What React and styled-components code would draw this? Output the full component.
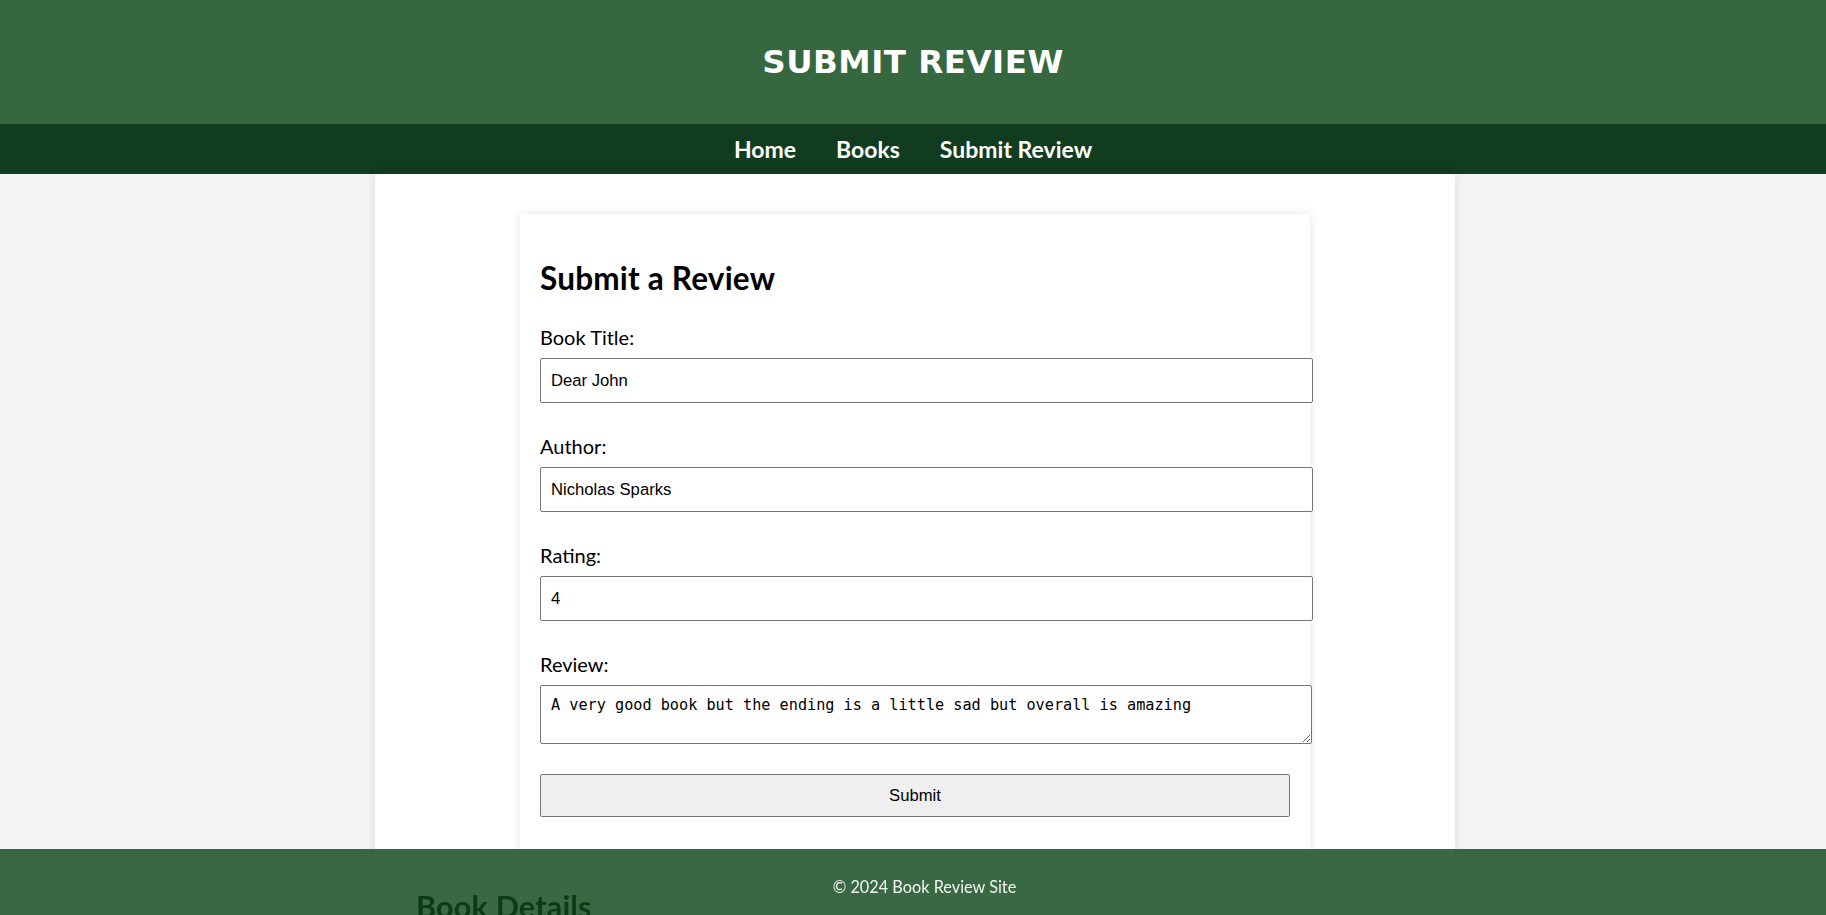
import React from 'react'
import styled, { createGlobalStyle } from 'styled-components'

const GlobalStyle = createGlobalStyle`
  html, body {
    margin: 0;
    padding: 0;
    overflow: hidden;
  }
  body {
    background: #f4f4f4;
    font-family: Lato, "Open Sans", sans-serif;
    color: #000;
  }
`

const Header = styled.header`
  height: 124px;
  background: #35683f;
  display: flex;
  align-items: center;
  justify-content: center;
`

const Title = styled.h1`
  margin: 0;
  color: #fff;
  font-family: "Comic Sans MS", "DejaVu Sans", sans-serif;
  font-size: 32.5px;
  font-weight: bold;
  letter-spacing: 0.5px;
`

const Nav = styled.nav`
  height: 50px;
  background: #113c1f;
  display: flex;
  align-items: center;
  justify-content: center;
  gap: 40px;
`

const NavLink = styled.a`
  color: #fff;
  text-decoration: none;
  font-weight: bold;
  font-size: 23px;
`

const Main = styled.main`
  padding-left: 4px;
`

const Container = styled.div`
  width: 1080px;
  margin: 0 auto;
  box-sizing: border-box;
  padding: 40px 41px 40px;
  background: #fff;
  box-shadow: 0 0 10px rgba(0, 0, 0, 0.1);
`

const Card = styled.section`
  width: 750px;
  margin: 0 auto;
  padding: 20px 20px 46px;
  background: #fff;
  box-shadow: 0 0 10px rgba(0, 0, 0, 0.1);
`

const Heading = styled.h2`
  margin: 24px 0 26px;
  font-size: 31.5px;
  font-weight: bold;
  line-height: 40px;
  letter-spacing: 0.2px;
`

const Field = styled.div`
  margin-bottom: 30px;
`

const Label = styled.label`
  display: block;
  font-size: 20px;
  line-height: 27px;
  margin-bottom: 7px;
`

const TextInput = styled.input`
  display: block;
  width: 751px;
  height: 43px;
  padding: 0 10px;
  margin: 0;
  border: 1px solid #767676;
  border-radius: 2px;
  font-family: "Liberation Sans", Arial, sans-serif;
  font-size: 16.67px;
  color: #000;
  background: #fff;
`

const TextArea = styled.textarea`
  display: block;
  box-sizing: border-box;
  width: 772px;
  height: 59px;
  padding: 10px;
  margin: 0;
  border: 1px solid #767676;
  border-radius: 2px;
  font-family: "DejaVu Sans Mono", "Liberation Mono", monospace;
  font-size: 15.2px;
  color: #000;
`

const SubmitButton = styled.button`
  display: block;
  width: 750px;
  height: 43px;
  margin-top: 30px;
  background: #efefef;
  border: 1px solid #767676;
  border-radius: 2px;
  font-family: "Liberation Sans", Arial, sans-serif;
  font-size: 16.67px;
  color: #000;
`

const DetailsTitle = styled.h2`
  position: relative;
  z-index: 2;
  margin: 23px 0 0;
  font-size: 30.5px;
  line-height: 40px;
  letter-spacing: 0.2px;
  font-weight: bold;
  color: #0d3a1a;
`

const Footer = styled.footer`
  position: fixed;
  left: 0;
  right: 0;
  bottom: 0;
  height: 66px;
  box-sizing: border-box;
  padding: 28px 0 0 23px;
  text-align: center;
  background: rgba(36, 89, 46, 0.9);
  color: #f4f4f4;
  font-size: 16.3px;
  line-height: 20px;
`

const fields = [
  { label: 'Book Title:', value: 'Dear John' },
  { label: 'Author:', value: 'Nicholas Sparks' },
  { label: 'Rating:', value: '4' },
]

export default function App() {
  return (
    <>
      <GlobalStyle />
      <Header>
        <Title>SUBMIT REVIEW</Title>
      </Header>
      <Nav>
        <NavLink href="#">Home</NavLink>
        <NavLink href="#">Books</NavLink>
        <NavLink href="#">Submit Review</NavLink>
      </Nav>
      <Main>
        <Container>
          <Card>
            <Heading>Submit a Review</Heading>
            <form onSubmit={(e) => e.preventDefault()}>
              {fields.map((f) => (
                <Field key={f.label}>
                  <Label>{f.label}</Label>
                  <TextInput type="text" defaultValue={f.value} />
                </Field>
              ))}
              <div>
                <Label>Review:</Label>
                <TextArea defaultValue="A very good book but the ending is a little sad but overall is amazing" />
              </div>
              <SubmitButton type="submit">Submit</SubmitButton>
            </form>
          </Card>
          <DetailsTitle>Book Details</DetailsTitle>
        </Container>
      </Main>
      <Footer>© 2024 Book Review Site</Footer>
    </>
  )
}
